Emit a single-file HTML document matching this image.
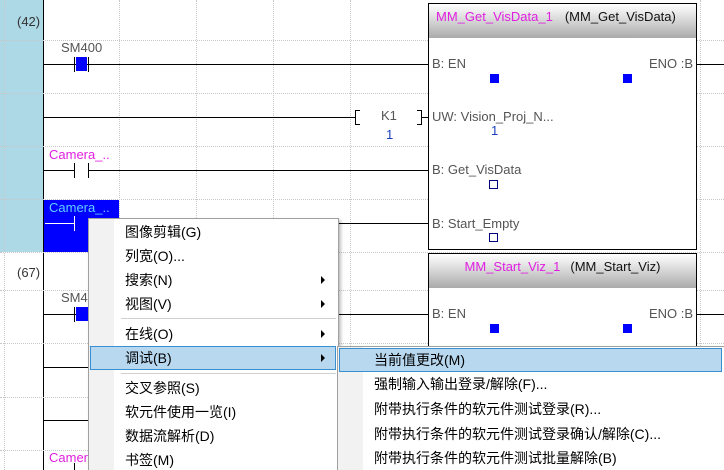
<!DOCTYPE html><html><head><meta charset="utf-8"><style>
*{margin:0;padding:0;box-sizing:border-box}
html,body{width:724px;height:470px;overflow:hidden}
body{background:#fff;position:relative;font-family:"Liberation Sans","Noto Sans CJK SC",sans-serif}
.a{position:absolute}
.hd{border-top:1px dotted #c8c8c8;height:0}
.vd{border-left:1px dotted #c8c8c8;width:0}
.ln{background:#000;height:1px}
.t{font-size:13px;color:#555;white-space:nowrap}
.fb{border:1px solid #000;background:#fff}
.fh{background:linear-gradient(#fff,#e6e6e6 30%,#aaa);height:34px;font-size:13px;color:#111;white-space:nowrap;padding-top:5px}
.bs{width:9px;height:9px;background:#0000ff}
.bo{width:9px;height:9px;border:1px solid #000080}
.m{font-size:14px;color:#000;white-space:nowrap;font-family:"Liberation Sans","Noto Sans CJK SC",sans-serif}
.ar{width:0;height:0;border-left:4px solid #000;border-top:4px solid transparent;border-bottom:4px solid transparent}
</style></head><body>
<div class="a" style="left:0;top:0;width:43px;height:252px;background:#add8e6"></div>
<div class="a" style="left:43px;top:0;width:1px;height:470px;background:#000"></div>
<div class="a hd" style="left:0;top:40px;width:724px"></div>
<div class="a hd" style="left:0;top:93px;width:724px"></div>
<div class="a hd" style="left:0;top:146px;width:724px"></div>
<div class="a hd" style="left:0;top:199px;width:724px"></div>
<div class="a hd" style="left:0;top:252px;width:724px"></div>
<div class="a hd" style="left:0;top:290px;width:724px"></div>
<div class="a hd" style="left:0;top:343px;width:724px"></div>
<div class="a hd" style="left:0;top:397px;width:724px"></div>
<div class="a hd" style="left:0;top:450px;width:724px"></div>
<div class="a vd" style="left:4px;top:0;height:470px"></div>
<div class="a vd" style="left:119px;top:0;height:470px"></div>
<div class="a vd" style="left:196px;top:0;height:470px"></div>
<div class="a vd" style="left:273px;top:0;height:470px"></div>
<div class="a vd" style="left:350px;top:0;height:470px"></div>
<div class="a vd" style="left:700px;top:0;height:470px"></div>
<div class="a t" style="left:17px;top:14px;color:#333">(42)</div>
<div class="a t" style="left:17px;top:265px;color:#333">(67)</div>
<div class="a t" style="left:61px;top:40px">SM400</div>
<div class="a ln" style="left:44px;top:64px;width:384px"></div>
<div class="a" style="left:74px;top:57px;width:1px;height:15px;background:#000"></div>
<div class="a" style="left:88px;top:57px;width:1px;height:15px;background:#000"></div>
<div class="a" style="left:76px;top:57px;width:11px;height:14px;background:#0000ff"></div>
<div class="a ln" style="left:44px;top:117px;width:384px"></div>
<div class="a" style="left:355px;top:110px;width:5px;height:15px;border:1px solid #000;border-right:none;background:#fff"></div>
<div class="a" style="left:417px;top:110px;width:5px;height:15px;border:1px solid #000;border-left:none;background:#fff"></div>
<div class="a" style="left:360px;top:110px;width:57px;height:15px;background:#fff"></div>
<div class="a t" style="left:381px;top:108px">K1</div>
<div class="a t" style="left:386px;top:127px;color:#1a3fbf">1</div>
<div class="a t" style="left:49px;top:147px;color:#e020e0">Camera_..</div>
<div class="a ln" style="left:44px;top:170px;width:384px"></div>
<div class="a" style="left:74px;top:163px;width:1px;height:15px;background:#000"></div>
<div class="a" style="left:88px;top:163px;width:1px;height:15px;background:#000"></div>
<div class="a" style="left:75px;top:163px;width:13px;height:15px;background:#fff"></div>
<div class="a" style="left:44px;top:200px;width:75px;height:52px;background:#0000ff"></div>
<div class="a t" style="left:49px;top:200px;color:#5fd0ff">Camera_..</div>
<div class="a" style="left:45px;top:223px;width:30px;height:1px;background:#fff"></div>
<div class="a" style="left:74px;top:216px;width:1px;height:15px;background:#fff"></div>
<div class="a ln" style="left:338px;top:223px;width:90px"></div>
<div class="a t" style="left:61px;top:290px">SM4</div>
<div class="a ln" style="left:44px;top:314px;width:44px"></div>
<div class="a" style="left:74px;top:307px;width:1px;height:15px;background:#000"></div>
<div class="a" style="left:76px;top:307px;width:12px;height:14px;background:#0000ff"></div>
<div class="a ln" style="left:338px;top:314px;width:90px"></div>
<div class="a ln" style="left:44px;top:367px;width:46px"></div>
<div class="a ln" style="left:44px;top:420px;width:46px"></div>
<div class="a t" style="left:49px;top:450px;color:#e020e0">Camer</div>
<div class="a" style="left:74px;top:463px;width:1px;height:8px;background:#000"></div>
<div class="a fb" style="left:428px;top:3px;width:269px;height:247px">
<div class="fh"><span style="color:#e020e0;margin-left:7px">MM_Get_VisData_1</span><span style="margin-left:12px">(MM_Get_VisData)</span></div></div>
<div class="a t" style="left:432px;top:56px">B: EN</div>
<div class="a t" style="left:649px;top:56px">ENO :B</div>
<div class="a bs" style="left:490px;top:74px"></div>
<div class="a bs" style="left:623px;top:74px"></div>
<div class="a ln" style="left:697px;top:64px;width:27px"></div>
<div class="a t" style="left:432px;top:109px">UW: Vision_Proj_N...</div>
<div class="a t" style="left:491px;top:123px;color:#1a3fbf">1</div>
<div class="a t" style="left:432px;top:162px">B: Get_VisData</div>
<div class="a bo" style="left:489px;top:180px"></div>
<div class="a t" style="left:432px;top:216px">B: Start_Empty</div>
<div class="a bo" style="left:489px;top:233px"></div>
<div class="a fb" style="left:428px;top:253px;width:269px;height:230px">
<div class="fh" style="text-align:center"><span style="color:#e020e0">MM_Start_Viz_1</span><span style="margin-left:10px">(MM_Start_Viz)</span></div></div>
<div class="a t" style="left:432px;top:306px">B: EN</div>
<div class="a t" style="left:649px;top:306px">ENO :B</div>
<div class="a bs" style="left:490px;top:324px"></div>
<div class="a bs" style="left:623px;top:324px"></div>
<div class="a ln" style="left:697px;top:314px;width:27px"></div>
<div class="a" style="left:88px;top:218px;width:251px;height:260px;background:#f2f2f2;border:1px solid #a0a0a0;box-shadow:2px 2px 3px rgba(0,0,0,.25)">
<div class="a" style="left:25px;top:0;width:224px;height:260px;background:#fff"></div></div>
<div class="a m" style="left:125px;top:222px">图像剪辑(G)</div>
<div class="a m" style="left:125px;top:246px">列宽(O)...</div>
<div class="a m" style="left:125px;top:270px">搜索(N)</div><div class="a ar" style="left:321px;top:276px"></div>
<div class="a m" style="left:125px;top:294px">视图(V)</div><div class="a ar" style="left:321px;top:300px"></div>
<div class="a" style="left:121px;top:318px;width:215px;height:1px;background:#d0d0d0"></div>
<div class="a m" style="left:125px;top:324px">在线(O)</div><div class="a ar" style="left:321px;top:330px"></div>
<div class="a" style="left:90px;top:346px;width:246px;height:24px;background:#b8d8f0;border:1px solid #3a8fd0"></div>
<div class="a m" style="left:125px;top:348px">调试(B)</div><div class="a ar" style="left:321px;top:354px"></div>
<div class="a" style="left:121px;top:373px;width:215px;height:1px;background:#d0d0d0"></div>
<div class="a m" style="left:125px;top:378px">交叉参照(S)</div>
<div class="a m" style="left:125px;top:402px">软元件使用一览(I)</div>
<div class="a m" style="left:125px;top:426px">数据流解析(D)</div>
<div class="a m" style="left:125px;top:450px">书签(M)</div>
<div class="a" style="left:337px;top:346px;width:390px;height:130px;background:#f2f2f2;border:1px solid #a0a0a0">
<div class="a" style="left:25px;top:0;width:370px;height:130px;background:#fff"></div></div>
<div class="a" style="left:339px;top:348px;width:383px;height:24px;background:#b8d8f0;border:1px solid #3a8fd0"></div>
<div class="a m" style="left:374px;top:350px">当前值更改(M)</div>
<div class="a m" style="left:374px;top:374px">强制输入输出登录/解除(F)...</div>
<div class="a m" style="left:374px;top:399px">附带执行条件的软元件测试登录(R)...</div>
<div class="a m" style="left:374px;top:424px">附带执行条件的软元件测试登录确认/解除(C)...</div>
<div class="a m" style="left:374px;top:448px">附带执行条件的软元件测试批量解除(B)</div>
</body></html>
